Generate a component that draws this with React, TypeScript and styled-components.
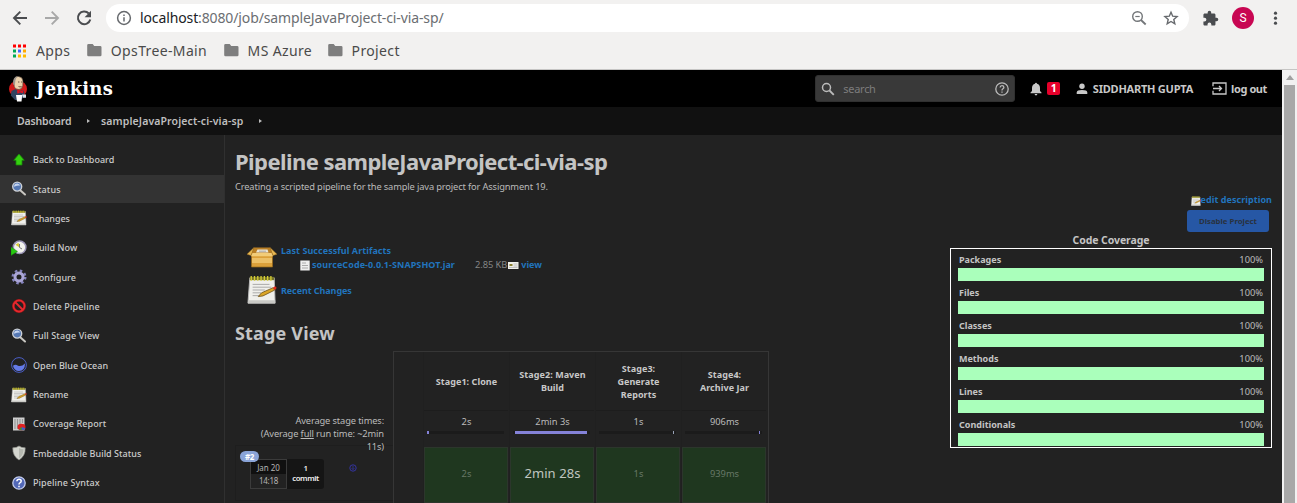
import React from 'react';
import styled, { createGlobalStyle, css } from 'styled-components';

const GlobalStyle = createGlobalStyle`
  * { box-sizing: border-box; }
  body { margin: 0; overflow: hidden; font-family: "Noto Sans", "Open Sans", sans-serif; background: #222; }
  svg { display: block; flex: none; }
`;

const Window = styled.div`
  width: 1297px; height: 503px; overflow: hidden; display: flex; flex-direction: column;
`;

/* ---------- browser chrome ---------- */
const Chrome = styled.header`
  height: 70px; flex: none; background: #f2f1f0; border-bottom: 1px solid #c6c5c4;
`;
const Toolbar = styled.div`
  height: 36px; display: flex; align-items: center; padding: 0 0 0 11px;
`;
const NavIcons = styled.div`
  width: 95px; display: flex; gap: 14px; flex: none;
`;
const Omnibox = styled.div`
  width: 1083px; height: 28px; border-radius: 14px; background: #fff; display: flex; align-items: center;
  padding: 0 10px 0 10px; font-size: 14px; line-height: 20px; color: #6b6e72; letter-spacing: -0.12px;
`;
const Url = styled.span`
  flex: 1; padding-left: 8px;
  b { font-weight: 400; color: #202124; }
`;
const OmniActions = styled.div`display: flex; gap: 14px;`;
const ToolbarEnd = styled.div`
  display: flex; align-items: center; margin-left: 13px;
`;
const Avatar = styled.div`
  width: 22px; height: 22px; margin: 0 14px 0 13px; border-radius: 50%; background: #c80652; color: #fff;
  font: 12px/22px Roboto, sans-serif; text-align: center;
`;
const Bookmarks = styled.nav`
  display: flex; align-items: center; height: 29px; padding-left: 12px; font-size: 14px; color: #4a4a4a;
`;
const Bookmark = styled.span<{ $gap: number; $icon: number }>`
  display: flex; align-items: center; gap: ${p => p.$icon}px; margin-right: ${p => p.$gap}px; letter-spacing: 0.36px;
`;

/* ---------- page frame ---------- */
const Viewport = styled.div`flex: 1; min-height: 0; display: flex;`;
const Page = styled.div`width: 1282px; display: flex; flex-direction: column; color: #bbb;`;
const Scrollbar = styled.div`
  width: 15px; background: #f1f1f1; display: flex; flex-direction: column; align-items: center;
`;
const ScrollUp = styled.div`height: 15px; display: flex; align-items: center;`;
const Thumb = styled.div`width: 11px; flex: 1; background: #a8a8a8;`;

const Header = styled.div`
  height: 37px; flex: none; background: #000; display: flex; align-items: center; padding: 0 15px 0 8px;
`;
const Brand = styled.div`
  display: flex; align-items: center; gap: 8px; flex: 1; color: #fff;
  font: 700 18px/24px "DejaVu Serif", serif; letter-spacing: 0.2px;
`;
const SearchBox = styled.div`
  width: 200px; height: 27px; border-radius: 3px; background: #393939; border: 1px solid #303030; display: flex; align-items: center;
  padding: 0 5px 0 5px; font-size: 11px; color: #7d7d7d; letter-spacing: -0.3px;
  span { flex: 1; padding-left: 8px; }
`;
const Alerts = styled.div`display: flex; align-items: center; gap: 5px; margin-left: 15px;`;
const AlertCount = styled.span`
  width: 13px; height: 13px; border-radius: 2px; background: #e6002a; color: #fff; font: 700 10.5px/13px "Noto Sans", sans-serif; text-align: center;
`;
const HeaderLink = styled.span<{ $left: number; $gap: number; $track: number }>`
  display: flex; align-items: center; margin-left: ${p => p.$left}px; gap: ${p => p.$gap}px; white-space: nowrap;
  font-size: 11px; font-weight: 700; letter-spacing: ${p => p.$track}px; color: #c8c8c8;
`;
const Breadcrumbs = styled.div`
  height: 28px; flex: none; background: #111; display: flex; align-items: center; padding-left: 17px;
  font-size: 10.5px; font-weight: 600; color: #bfbfbf;
`;
const Crumb = styled.span<{ $track: number }>`letter-spacing: ${p => p.$track}px;`;
const Caret = styled.i`
  width: 0; height: 0; margin: 0 11px 0 15.5px; border: 2.5px solid transparent; border-left: 3px solid #bbb; border-right: 0;
`;

const Body = styled.div`flex: 1; min-height: 0; display: flex; background: #222;`;

/* ---------- side panel ---------- */
const Side = styled.aside`
  width: 225px; flex: none; border-right: 1px solid #303030; padding-top: 11.1px;
`;
const Task = styled.div<{ $active?: boolean; $track: number }>`
  height: 27.35px; margin-bottom: 2px; display: flex; align-items: center; gap: 6px; padding-left: 11px;
  font-size: 9px; font-weight: 500; letter-spacing: ${p => p.$track}px; color: #ccc;
  ${p => p.$active && css`background: #333;`}
`;

/* ---------- main panel ---------- */
const Main = styled.main`flex: 1; padding: 0 10px; min-width: 0; display: flex; flex-direction: column;`;
const Title = styled.h1`
  margin: 11px 0 0; font-size: 22px; line-height: 30px; font-weight: 700; letter-spacing: -0.57px; color: #c4c4c4;
`;
const Description = styled.p`
  margin: 4px 0 0; font-size: 9.3px; line-height: 13px; letter-spacing: -0.14px;
`;
const Columns = styled.div`display: flex; justify-content: space-between; flex: 1; min-height: 0;`;
const Left = styled.div`width: 560px;`;
const Right = styled.div`width: 322px; display: flex; flex-direction: column; align-items: flex-end;`;

const linkText = css`font-size: 9px; font-weight: 700; color: #2174bd; white-space: nowrap;`;
const Link = styled.a<{ $track?: number }>`${linkText} letter-spacing: ${p => p.$track ?? 0.05}px;`;

const Artifacts = styled.section`
  margin: 51px 0 0 12px;
  & > div > svg { margin-top: 1px; }
`;
const SummaryRow = styled.div<{ $h: number }>`height: ${p => p.$h}px; display: flex; gap: 4px;`;
const SummaryText = styled.div<{ $top: number }>`padding-top: ${p => p.$top}px; line-height: 14px; display: flex; flex-direction: column;`;
const FileRow = styled.div`display: flex; align-items: center; padding-left: 18px; height: 14px;`;
const FileSize = styled.span`font-size: 9.3px; color: #858585; margin: 0 0 0 20px; letter-spacing: -0.05px;`;

const SectionTitle = styled.h2`
  margin: 15px 0 0; font-size: 18px; line-height: 24px; letter-spacing: 0.16px; color: #c4c4c4;
`;
const StageView = styled.section`display: flex; margin-top: 6px;`;
const RunColumn = styled.div`width: 158px; padding-top: 63px;`;
const AverageNote = styled.div`
  padding-right: 9px; text-align: right; font-size: 9.3px; line-height: 13px; letter-spacing: -0.13px; height: 31px; position: relative;
`;
const RunCard = styled.div`
  border: 1px solid #1e1e1e; border-right: 0; height: 56px; padding: 5px 0 0 4px;
`;
const RunBadge = styled.div`
  width: 19px; height: 11px; border-radius: 6px; background: #8aa4d8; color: #fff; font-size: 8px; line-height: 11px;
  font-weight: 700; text-align: center; letter-spacing: -0.3px; position: relative; z-index: 1;
`;
const RunInfo = styled.div`display: flex; margin: -3px 0 0 10px;`;
const RunDate = styled.div`
  width: 37px; height: 30px; border: 1px solid #3b3b3b; font-size: 8px; text-align: center; color: #b4b4b4;
  div { height: 14px; line-height: 15px; background: #101010; letter-spacing: -0.06px; }
  div + div { background: #222; line-height: 14px; letter-spacing: -0.28px; }
`;
const Commits = styled.div`
  width: 37px; height: 30px; border-radius: 0 3px 3px 0; background: #151515; color: #eee; font-size: 7.8px; line-height: 10px; font-weight: 600;
  text-align: center; padding-top: 4px; letter-spacing: -0.4px;
`;
const RunMark = styled.div`padding: 5px 0 0 25px;`;

const Stages = styled.div`
  width: 376px; height: 170px; border: 1px solid #363636; padding: 0 0 0 30px; display: flex; gap: 2px;
`;
const Stage = styled.div`width: 84px; text-align: center; box-shadow: -1px 0 0 #202020;`;
const StageName = styled.div`
  height: 59px; display: flex; align-items: center; justify-content: center; font-size: 9px; line-height: 13px; font-weight: 700;
  color: #c8c8c8; padding: 0 7px 0 8px; letter-spacing: 0.06px; border-bottom: 1px solid #1d1d1d;
`;
const Average = styled.div`height: 36px; padding: 4px 0 0 1px; font-size: 9.3px; line-height: 13px;`;
const Track = styled.div`height: 3px; margin: 3px 4px 0 2px; background: #1b1b1b; display: flex;`;
const Fill = styled.div<{ $w: number; $x: number; $c?: string }>`
  width: ${p => p.$w}px; margin-left: ${p => p.$x}px; background: ${p => p.$c || '#8482d8'};
`;
const StageCell = styled.div<{ $big?: boolean }>`
  height: 56px; border: 1px solid #2c362c; background: #1f371f; display: flex; align-items: center; justify-content: center;
  font-size: ${p => (p.$big ? 13 : 9.3)}px; letter-spacing: ${p => (p.$big ? 0.08 : 0)}px; color: ${p => (p.$big ? '#c0c6c0' : '#677767')};
  padding: 0 0 4px 1px;
`;

const EditLink = styled.div`display: flex; align-items: center; height: 13px; svg { margin-top: 2px; }`;
const DisableButton = styled.button`
  width: 82px; height: 22px; margin: 4px 3px 0 0; padding: 0; border: 0; border-radius: 3px; background: #2657a5; color: #29323f;
  font: 700 7.8px/20px "Noto Sans", sans-serif; letter-spacing: 0;
`;
const CoverageTitle = styled.div`
  width: 100%; text-align: center; font-size: 10.5px; line-height: 16px; font-weight: 700; letter-spacing: -0.08px; color: #c4c4c4;
`;
const Coverage = styled.div`
  width: 322px; height: 200px; border: 1px solid #fff; padding: 1px 7px 0;
`;
const CoverageRow = styled.div`height: 33px; padding-top: 3px;`;
const CoverageLabel = styled.div`
  display: flex; justify-content: space-between; padding: 0 1px; height: 15px; line-height: 13px; font-size: 9px;
  b { color: #c4c4c4; }
  span { font-size: 9.3px; letter-spacing: 0; }
`;
const CoverageBar = styled.div`height: 13px; background: #aaffbb;`;

/* ---------- icons ---------- */
const Folder = () => (
  <svg width="15" height="13" viewBox="0 0 15 13"><path d="M1.5 0h4.2l1.5 2h6q1.3 0 1.3 1.3v7.6q0 1.3-1.3 1.3H1.5Q.2 12.200.2 10.900V1.300Q.2 0 1.500 0z" fill="#7e7e7e" /></svg>
);
const AppsGrid = () => {
  const colors = ['#f00', '#f00', '#f00', '#0a5', '#46f', '#fa0', '#0a5', '#fb0', '#fb0'];
  return (
    <svg width="14" height="14" viewBox="0 0 14 14">
      {colors.map((c, i) => <rect key={i} x={(i % 3) * 5 + 1} y={Math.floor(i / 3) * 5 + 0.5} width="3" height="3" fill={c} />)}
    </svg>
  );
};
const JenkinsMark = () => (
  <svg width="20" height="28" viewBox="0 0 20 28">
    <ellipse cx="10" cy="14" rx="9" ry="8.600" fill="#d21a1a" />
    <path d="M2.800 20.500 3.500 16l4-2 3 2.500 4.500-1.500 1.500 3-1 4.500-3 2.500H7z" fill="#2f4360" />
    <path d="M5.800 6Q6.500 1.300 10.500 1.500q4.200.3 4.500 4.500l-.2 4.500q-.8 3.800-3.800 4Q7.500 14.500 6.300 12z" fill="#ecd2ac" stroke="#4b3a30" strokeWidth=".6" />
    <path d="M5.200 9.500Q4.300 1.500 10 1 7.300 3 7.200 7.500L6.600 10z" fill="#9d968e" />
    <path d="M10 7h1.400M13 7h1.200M10.500 11.500q1.500.9 3 0" stroke="#503428" strokeWidth=".8" fill="none" />
    <path d="m9 15.500 2.500 1 3.500-1.300.2 3-3.200-.8-2.600 1.300z" fill="#e01522" />
    <path d="M8 20h6.200l-.7 6.500H9z" fill="#fff" />
    <path d="M14 19.500h4v3.200h-3z" fill="#dbe2ea" />
  </svg>
);
const Search = () => (
  <svg width="14" height="14" viewBox="0 0 14 14" fill="none" stroke="#bbb">
    <circle cx="5.500" cy="5.500" r="4" strokeWidth="1.500" /><path d="m8.500 8.500 4.300 4.300" strokeWidth="1.800" />
  </svg>
);

const Magnifier = () => (
  <svg width="16" height="16" viewBox="0 0 16 16">
    <path d="m9.500 9.500 4.500 4" stroke="#c9c7c2" strokeWidth="2" strokeLinecap="round" />
    <circle cx="6.200" cy="5.600" r="4.500" fill="#5578b4" stroke="#ccd0d6" strokeWidth="1.400" />
    <path d="M3 5.800Q3.200 2.300 6.500 2.500q2 .4 2.700 2Q6.500 4.200 3 5.800z" fill="#c6d5f0" />
  </svg>
);
const Notepad = ({ size = 16 }: { size?: number }) => (
  <svg width={size} height={size} viewBox="0 0 32 32">
    <path d="M3 3h26l1 27H1z" fill="#f0f0ec" stroke="#bbb" /><path d="M1.500 27h28.500v3H1z" fill="#c9c9c5" />
    <path d="M3 2h26v3.500H3z" fill="#77752a" />
    <path d="M4.500 1v5M8 1v5M11.500 1v5M15 1v5M18.500 1v5M22 1v5M25.500 1v5" stroke="#d6cd35" strokeWidth="1.400" />
    <path d="M6 10h18M6 13h20M6 16h13M6 19h9M6 22h8" stroke="#a5a5a5" strokeWidth="1" />
    <path d="m12 23 3.500-4L28 13.500l1.500 2.600L17 22.300z" fill="#dca627" stroke="#73561b" strokeWidth=".9" />
    <path d="m27.500 13.500 2-1.200q1.700-.3 2 1.200 0 1.500-2 2.400z" fill="#e03020" />
  </svg>
);
const icons: Record<string, React.ReactNode> = {
  up: <svg width="16" height="16" viewBox="0 0 16 16"><path d="M8 2 13.300 8.300H11V13H5V8.300H2.700z" fill="#35d010" stroke="#188a08" strokeWidth=".8" /></svg>,
  search: <Magnifier />,
  notepad: <Notepad />,
  build: (
    <svg width="16" height="16" viewBox="0 0 16 16">
      <circle cx="8.600" cy="7.300" r="6.300" fill="#f3f3ee" stroke="#9a94b5" strokeWidth="1.500" />
      <path d="M8.500 7.500 4.500 4.800 7.500 2.700z" fill="#d6ca38" /><path d="M8.500 4v3.500l2.500 1.500" stroke="#777" fill="none" />
      <path d="m0 7 6.500 4.400L0 15.500z" fill="#28c911" stroke="#13850a" strokeWidth=".5" />
    </svg>
  ),
  gear: (
    <svg width="16" height="16" viewBox="0 0 16 16" fill="none">
      <circle cx="8" cy="8" r="6.300" stroke="#8583bd" strokeWidth="2.400" strokeDasharray="2.475 2.475" />
      <circle cx="8" cy="8" r="4" stroke="#aaa5d6" strokeWidth="3" />
    </svg>
  ),
  deny: (
    <svg width="16" height="16" viewBox="0 0 16 16" fill="none">
      <circle cx="8" cy="8" r="5.600" stroke="#8e1517" strokeWidth="2.800" /><circle cx="8" cy="8" r="5.600" stroke="#e6292e" strokeWidth="1.700" />
      <path d="m4 4 8 8" stroke="#e6292e" strokeWidth="1.800" />
    </svg>
  ),
  ocean: (
    <svg width="16" height="16" viewBox="0 0 16 16">
      <circle cx="8" cy="8" r="7.400" fill="none" stroke="#4a5ec6" /><path d="M2 8.700q2.500-1.700 5 0 3.500 1.300 7-2.200Q14 14 8 14 3 13.800 2 8.700z" fill="#647ae8" />
    </svg>
  ),
  report: (
    <svg width="16" height="16" viewBox="0 0 16 16">
      <path d="M2 1.500h11.500v13H2z" fill="#cfcfcf" /><path d="M4 3v10M6.500 3v10M9 3v6M11.500 3v4" stroke="#969696" strokeWidth="1.200" />
      <ellipse cx="10.500" cy="11" rx="4" ry="3.200" fill="#e02222" /><path d="M10.500 11v3.200q3-.1 4-2z" fill="#3a63d0" /><path d="m10.500 11-2.500 2.600 2.500.6z" fill="#2da52d" />
    </svg>
  ),
  shield: (
    <svg width="16" height="16" viewBox="0 0 16 16">
      <path d="M8 1q2.500 2 6.200 1.800Q14.500 11 8 15 1.500 11 1.800 2.800 5.500 3 8 1z" fill="#d4d6cf" stroke="#8f918b" strokeWidth=".7" />
      <path d="M8 3q2 1.300 4.600 1.300Q12.500 10.500 8 13.300z" fill="#b5b8b0" />
    </svg>
  ),
  help: (
    <svg width="16" height="16" viewBox="0 0 16 16">
      <circle cx="8" cy="8" r="6.200" fill="#5268b8" stroke="#c3cceb" strokeWidth="1.300" />
      <path d="M5.900 6.300Q6 4.200 8.100 4.200t2.100 1.900Q10.200 7.300 8.900 7.900 8 8.300 8 9.600M8 10.700v1.500" stroke="#fff" strokeWidth="1.500" fill="none" />
    </svg>
  ),
};

const BoxIcon = () => (
  <svg width="30" height="24" viewBox="0 0 30 24">
    <path d="M4.500 10h21v12h-21z" fill="#dba03a" stroke="#9a6a1a" strokeWidth=".7" />
    <path d="M5 13h20v5H5z" fill="#ecc067" />
    <path d="M7 2.500h16l3 7H4z" fill="#b97f25" /><path d="M10.500 4.500h10l1 3H9z" fill="#e9e4d6" /><path d="M12 6.200h7" stroke="#aaa" />
    <path d="M7 2.500 4 10.500 0 9.200zM23 2.500l3 8 4-1.300z" fill="#e9b955" stroke="#9a6a1a" strokeWidth=".5" />
    <path d="M5.500 8h19l1.500 3.300H4z" fill="#f2cc78" />
  </svg>
);

const bookmarks = [['OpsTree-Main', 17], ['MS Azure', 16], ['Project', 0]] as const;
const tasks: [string, string, number][] = [
  ['up', 'Back to Dashboard', 0], ['search', 'Status', 0.1], ['notepad', 'Changes', -0.05], ['build', 'Build Now', 0.04],
  ['gear', 'Configure', 0.05], ['deny', 'Delete Pipeline', 0.15], ['search', 'Full Stage View', 0.13], ['ocean', 'Open Blue Ocean', 0.03],
  ['notepad', 'Rename', 0], ['report', 'Coverage Report', 0.08], ['shield', 'Embeddable Build Status', 0.04], ['help', 'Pipeline Syntax', 0.08],
];
const stages = [
  { name: 'Stage1: Clone', avg: '2s', last: '2s', w: 2, x: 0 },
  { name: 'Stage2: Maven Build', avg: '2min 3s', last: '2min 28s', w: 72, x: 2, big: true },
  { name: 'Stage3: Generate Reports', avg: '1s', last: '1s', w: 1, x: 74, c: '#9aa4b8' },
  { name: 'Stage4: Archive Jar', avg: '906ms', last: '939ms', w: 1, x: 74 },
];
const coverage = ['Packages', 'Files', 'Classes', 'Methods', 'Lines', 'Conditionals'];

export default function App() {
  return (
    <Window>
      <GlobalStyle />
      <Chrome>
        <Toolbar>
          <NavIcons>
            <svg width="18" height="18" viewBox="0 0 18 18" fill="none" stroke="#4a4c4f" strokeWidth="1.900"><path d="M16 9H3M9.300 2.700 3 9l6.300 6.300" /></svg>
            <svg width="18" height="18" viewBox="0 0 18 18" fill="none" stroke="#a8a8a8" strokeWidth="1.900"><path d="M2 9h13M8.700 2.700 15 9l-6.300 6.300" /></svg>
            <svg width="18" height="18" viewBox="0 0 18 18" fill="none" stroke="#4a4c4f" strokeWidth="2"><path d="M13.800 4.500A6.300 6.300 0 1 0 15.300 10.500" /><path d="M16 1.800v6.400H9.600z" fill="#4a4c4f" stroke="none" /></svg>
          </NavIcons>
          <Omnibox>
            <svg width="16" height="16" viewBox="0 0 16 16" fill="none" stroke="#66696d" strokeWidth="1.500"><circle cx="8" cy="8" r="6.400" /><path d="M8 7.200v4.200M8 4.500V6" /></svg>
            <Url><b>localhost</b>:8080/job/sampleJavaProject-ci-via-sp/</Url>
            <OmniActions>
              <svg width="18" height="16" viewBox="0 0 18 16" fill="none" stroke="#737679"><circle cx="6.500" cy="6.500" r="4.800" strokeWidth="1.400" /><path d="m10 10 4.700 4.500" strokeWidth="1.800" /><path d="M4.300 6.500h4.400" strokeWidth="1.200" /></svg>
              <svg width="16" height="16" viewBox="0 0 16 16" fill="none" stroke="#66696d" strokeWidth="1.400"><path d="m8 2.200 1.700 4 4.400.4-3.300 2.900 1 4.300L8 11.500l-3.800 2.300 1-4.300-3.300-2.900 4.400-.4z" /></svg>
            </OmniActions>
          </Omnibox>
          <ToolbarEnd>
            <svg width="17" height="17" viewBox="0 0 24 24" fill="#4a4c4f"><path d="M20.500 11H19V7c0-1.100-.9-2-2-2h-4V3.500a2.500 2.500 0 0 0-5 0V5H4c-1.100 0-2 .9-2 2v3.800h1.500a2.700 2.700 0 0 1 0 5.400H2V20c0 1.100.9 2 2 2h3.800v-1.500a2.700 2.700 0 0 1 5.400 0V22H17c1.100 0 2-.9 2-2v-4h1.500a2.500 2.500 0 0 0 0-5z" /></svg>
            <Avatar>S</Avatar>
            <svg width="16" height="16" viewBox="0 0 16 16" fill="#4a4c4f"><circle cx="7.500" cy="3.200" r="1.600" /><circle cx="7.500" cy="8.200" r="1.600" /><circle cx="7.500" cy="13.200" r="1.600" /></svg>
          </ToolbarEnd>
        </Toolbar>
        <Bookmarks>
          <Bookmark $gap={17} $icon={10}><AppsGrid />Apps</Bookmark>
          {bookmarks.map(([name, gap]) => <Bookmark key={name} $gap={gap} $icon={8.500}><Folder />{name}</Bookmark>)}
        </Bookmarks>
      </Chrome>

      <Viewport>
        <Page>
          <Header>
            <Brand><JenkinsMark />Jenkins</Brand>
            <SearchBox>
              <Search />
              <span>search</span>
              <svg width="14" height="14" viewBox="0 0 14 14" fill="none" stroke="#bbb" strokeWidth="1.300"><circle cx="7" cy="7" r="6.200" /><path d="M5.100 5.500Q5.200 3.600 7 3.600t1.900 1.700Q8.900 6.300 7.700 7 7 7.400 7 8.500M7 9.500v1.300" /></svg>
            </SearchBox>
            <Alerts>
              <svg width="12" height="14" viewBox="0 0 12 14" fill="#c8c8c8"><path d="M6 .7q1 0 1 1.100 3 .8 3 4.200v3l1.500 1.500v.8H.5v-.8L2 9V6q0-3.400 3-4.200Q5 .7 6 .700zM4.600 12h2.800Q7.300 13.400 6 13.400T4.600 12z" /></svg>
              <AlertCount>1</AlertCount>
            </Alerts>
            <HeaderLink $left={16} $gap={4.5} $track={-0.23}>
              <svg width="12" height="12" viewBox="0 0 12 12" fill="#c8c8c8"><circle cx="6" cy="3.200" r="2.700" /><path d="M.7 11V9.500Q.9 7.100 6 7.100t5.300 2.400V11z" /></svg>
              SIDDHARTH GUPTA
            </HeaderLink>
            <HeaderLink $left={19} $gap={4} $track={-0.4}>
              <svg width="15" height="13" viewBox="0 0 15 13" fill="none" stroke="#c8c8c8" strokeWidth="1.300"><path d="M1 4.300V1h13v11H1V8.700M1 6.500h8.500M7 4l2.500 2.500L7 9" /></svg>
              log out
            </HeaderLink>
          </Header>
          <Breadcrumbs>
            <Crumb $track={-0.15}>Dashboard</Crumb><Caret /><Crumb $track={0.12}>sampleJavaProject-ci-via-sp</Crumb><Caret />
          </Breadcrumbs>

          <Body>
            <Side>
              {tasks.map(([icon, label, track]) => (
                <Task key={label} $active={label === 'Status'} $track={track}>{icons[icon]}{label}</Task>
              ))}
            </Side>
            <Main>
              <Title>Pipeline sampleJavaProject-ci-via-sp</Title>
              <Description>Creating a scripted pipeline for the sample java project for Assignment 19.</Description>
              <Columns>
                <Left>
                  <Artifacts>
                    <SummaryRow $h={30}>
                      <BoxIcon />
                      <SummaryText $top={0}>
                        <Link>Last Successful Artifacts</Link>
                        <FileRow>
                          <svg width="13" height="11" viewBox="0 0 13 11"><path d="M1.300 .5h9.400v10H1.300z" fill="#eee" /><path d="M3 3h4M3 5.500h6M3 8h6" stroke="#aaa" /></svg>
                          <Link $track={0.08}>sourceCode-0.0.1-SNAPSHOT.jar</Link>
                          <FileSize>2.85 KB</FileSize>
                          <svg width="14" height="9" viewBox="0 0 14 9"><path d="M1 1h10.500v7H1z" fill="#f0f0ea" /><path d="M2.500 3h3v2h-3z" fill="#8b8030" /><path d="M6.500 3h4M6.500 5h4M2 6.500h8.500" stroke="#aaa" strokeWidth=".7" /></svg>
                          <Link $track={0}>view</Link>
                        </FileRow>
                      </SummaryText>
                    </SummaryRow>
                    <SummaryRow $h={32}>
                      <Notepad size={30} />
                      <SummaryText $top={10}><Link $track={-0.08}>Recent Changes</Link></SummaryText>
                    </SummaryRow>
                  </Artifacts>

                  <SectionTitle>Stage View</SectionTitle>
                  <StageView>
                    <RunColumn>
                      <AverageNote>Average stage times:<br />(Average <u>full</u> run time: ~2min<br />11s)</AverageNote>
                      <RunCard>
                        <RunBadge>#2</RunBadge>
                        <RunInfo>
                          <RunDate><div>Jan 20</div><div>14:18</div></RunDate>
                          <Commits>1<br />commit</Commits>
                          <RunMark>
                            <svg width="8" height="8" viewBox="0 0 8 8" fill="none" stroke="#3434a0"><circle cx="4" cy="4" r="3.200" /><path d="M4 2v3.500M2.600 4.200 4 5.600l1.400-1.400" strokeWidth=".8" /></svg>
                          </RunMark>
                        </RunInfo>
                      </RunCard>
                    </RunColumn>
                    <Stages>
                      {stages.map(s => (
                        <Stage key={s.name}>
                          <StageName>{s.name}</StageName>
                          <Average>{s.avg}<Track><Fill $w={s.w} $x={s.x} $c={s.c} /></Track></Average>
                          <StageCell $big={s.big}>{s.last}</StageCell>
                        </Stage>
                      ))}
                    </Stages>
                  </StageView>
                </Left>

                <Right>
                  <EditLink><Notepad size={10} /><Link $track={0.05}>edit description</Link></EditLink>
                  <DisableButton>Disable Project</DisableButton>
                  <CoverageTitle>Code Coverage</CoverageTitle>
                  <Coverage>
                    {coverage.map(name => (
                      <CoverageRow key={name}>
                        <CoverageLabel><b>{name}</b><span>100%</span></CoverageLabel>
                        <CoverageBar />
                      </CoverageRow>
                    ))}
                  </Coverage>
                </Right>
              </Columns>
            </Main>
          </Body>
        </Page>
        <Scrollbar>
          <ScrollUp><svg width="8" height="5" viewBox="0 0 8 5"><path d="M4 0 8 5H0z" fill="#a0a0a0" /></svg></ScrollUp>
          <Thumb />
        </Scrollbar>
      </Viewport>
    </Window>
  );
}
